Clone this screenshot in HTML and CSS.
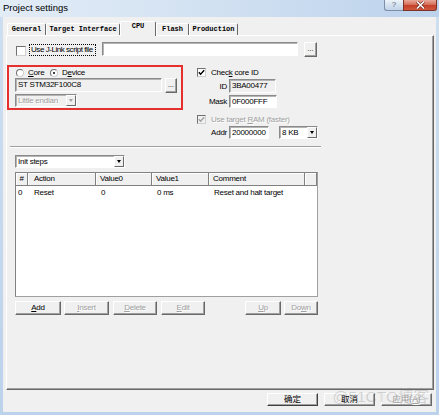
FILE: index.html
```html
<!DOCTYPE html>
<html>
<head>
<meta charset="utf-8">
<title>Project settings</title>
<link rel="stylesheet" href="styles.css">
</head>
<body>
<div class="window">
  <div class="titlebar">
    <span class="title">Project settings</span>
    <div class="caption-btns">
      <div class="cbtn help">?</div>
      <div class="cbtn close"><svg width="11" height="8" viewBox="0 0 11 8"><path d="M2 0.5 L9 7.5 M9 0.5 L2 7.5" stroke="#5a1a10" stroke-width="2.6"/><path d="M2 0.5 L9 7.5 M9 0.5 L2 7.5" stroke="#fff" stroke-width="1.6"/></svg></div>
    </div>
  </div>
  <div class="client">
    <div class="tabs">
      <div class="tab t-general">General</div>
      <div class="tab t-target">Target Interface</div>
      <div class="tab active t-cpu">CPU</div>
      <div class="tab t-flash">Flash</div>
      <div class="tab t-prod">Production</div>
    </div>
    <div class="panel">
      <div class="jlink-row">
        <span class="checkbox jl-check"></span>
        <span class="focus-label">Use J-Link script file</span>
        <span class="textbox jlink-path"></span>
        <span class="btn browse">...</span>
      </div>
      <div class="mid">
        <div class="target-box">
          <div class="radio-row">
            <span class="radio"></span><span class="rlabel core-label"><u>C</u>ore</span>
            <span class="radio checked"></span><span class="rlabel">D<u>e</u>vice</span>
          </div>
          <div class="device-row">
            <span class="textbox readonly device-name">ST STM32F100C8</span>
            <span class="btn browse device-browse">...</span>
          </div>
          <div class="combo disabled endian"><span class="combo-text">Little endian</span><span class="drop"></span></div>
        </div>
        <div class="core-box">
          <div class="check-row">
            <span class="checkbox small checked"><svg width="7" height="7" viewBox="0 0 7 7"><path d="M0.8 3.2 L2.6 5.2 L6.2 1.2" stroke="#000" stroke-width="1.4" fill="none"/></svg></span>
            <span class="clabel">Chec<u>k</u> core ID</span>
          </div>
          <div class="field">
            <span class="flabel">ID</span>
            <span class="textbox readonly id-box">3BA00477</span>
          </div>
          <div class="field">
            <span class="flabel">Mask</span>
            <span class="textbox mask-box">0F000FFF</span>
          </div>
          <div class="check-row ram-row disabled">
            <span class="checkbox small checked disabled-box"><svg width="7" height="7" viewBox="0 0 7 7"><path d="M0.8 3.2 L2.6 5.2 L6.2 1.2" stroke="#a0a0a0" stroke-width="1.4" fill="none"/></svg></span>
            <span class="clabel">Use target <u>R</u>AM (faster)</span>
          </div>
          <div class="field addr-row">
            <span class="flabel">Addr</span>
            <span class="textbox addr-box">20000000</span>
            <span class="combo size-combo"><span class="combo-text">8 KB</span><span class="drop"></span></span>
          </div>
        </div>
      </div>
      <div class="separator"></div>
      <div class="combo init-combo"><span class="combo-text">Init steps</span><span class="drop"></span></div>
      <div class="listview">
        <div class="lv-header">
          <span class="hcell c-num">#</span>
          <span class="hcell c-action">Action</span>
          <span class="hcell c-v0">Value0</span>
          <span class="hcell c-v1">Value1</span>
          <span class="hcell c-comment">Comment</span>
          <span class="hcell c-fill"></span>
        </div>
        <div class="lv-row">
          <span class="cell c-num">0</span>
          <span class="cell c-action">Reset</span>
          <span class="cell c-v0">0</span>
          <span class="cell c-v1">0 ms</span>
          <span class="cell c-comment">Reset and halt target</span>
        </div>
      </div>
      <div class="btn-row">
        <span class="btn b-add"><u>A</u>dd</span>
        <span class="btn disabled b-insert"><u>I</u>nsert</span>
        <span class="btn disabled b-delete"><u>D</u>elete</span>
        <span class="btn disabled b-edit"><u>E</u>dit</span>
        <span class="btn disabled b-up"><u>U</u>p</span>
        <span class="btn disabled b-down">Do<u>w</u>n</span>
      </div>
    </div>
    <div class="dialog-btns">
      <span class="btn dlg default">确定</span>
      <span class="btn dlg">取消</span>
      <span class="btn dlg disabled">应用(<u>A</u>)</span>
    </div>
    <div class="watermark">@51CTO博客</div>
  </div>
</div>
</body>
</html>
```

FILE: styles.css
```css
* { box-sizing: border-box; }
html, body { margin: 0; padding: 0; }
body {
  width: 439px;
  height: 415px;
  overflow: hidden;
  font-family: "Liberation Sans", Arial, sans-serif;
  font-size: 8px;
  letter-spacing: -0.25px;
  color: #000;
  background: #c2d6ed;
}
u { text-decoration: underline; text-underline-offset: 1px; }

.window {
  width: 439px;
  height: 415px;
  display: flex;
  flex-direction: column;
  background: linear-gradient(to bottom, #cfdff1, #bcd2eb);
}

/* title bar */
.titlebar {
  height: 17px;
  display: flex;
  justify-content: space-between;
  align-items: flex-start;
  padding: 0 2px 0 3px;
  background: linear-gradient(to right, #e2ecf7 0%, #d3e2f2 45%, #bcd2ec 100%);
}
.title {
  font-size: 9.5px;
  letter-spacing: 0;
  line-height: 1;
  margin-top: 3px;
}
.caption-btns { display: flex; }
.cbtn {
  height: 11px;
  display: flex;
  align-items: center;
  justify-content: center;
  border: 1px solid #7c8ea8;
  border-top: none;
}
.help {
  width: 19px;
  border-radius: 0 0 0 3px;
  border-right: none;
  background: linear-gradient(#eef3f9, #d3e0ee 55%, #c3d4e8);
  color: #5a6a80;
  font-size: 8px;
  letter-spacing: 0;
  line-height: 1;
}
.close {
  width: 34px;
  border-radius: 0 0 3px 0;
  border-color: #7b3326;
  background: linear-gradient(#e9a898, #d6705a 45%, #c5412a 55%, #d0583f);
}

/* client */
.client {
  flex: 1;
  margin: 0 3px 3px 3px;
  background: #f0f0f0;
  position: relative;
  display: flex;
  flex-direction: column;
  align-items: flex-start;
}

/* tabs */
.tabs {
  display: flex;
  align-items: flex-end;
  height: 18px;
  padding-left: 4px;
}
.tab {
  height: 12px;
  border-top: 1px solid #fff;
  border-left: 1px solid #fff;
  border-right: 1px solid #696969;
  border-radius: 2px 2px 0 0;
  font-family: "Liberation Mono", "DejaVu Sans Mono", monospace;
  font-weight: bold;
  font-size: 7px;
  letter-spacing: 0;
  line-height: 11px;
  text-align: center;
}
.t-general { width: 39px; }
.t-target { width: 74px; }
.t-cpu { width: 36px; }
.t-flash { width: 33px; }
.t-prod { width: 49px; }
.tab.active {
  height: 15px;
  margin-bottom: -1px;
  position: relative;
  z-index: 1;
  background: #f0f0f0;
  line-height: 9px;
}

/* panel */
.panel {
  margin-left: 3px;
  width: 428px;
  height: 355px;
  border-top: 1px solid #fff;
  border-left: 1px solid #fff;
  border-right: 1px solid #696969;
  border-bottom: 1px solid #696969;
  box-shadow: inset -1px -1px 0 #a0a0a0;
  display: flex;
  flex-direction: column;
  align-items: flex-start;
}

/* common controls */
.checkbox {
  display: inline-flex;
  align-items: center;
  justify-content: center;
  width: 10px;
  height: 10px;
  background: #fff;
  border: 1px solid;
  border-color: #707070 #d0d0d0 #d0d0d0 #707070;
}
.checkbox.small { width: 9px; height: 9px; }
.checkbox.disabled-box { background: #f0f0f0; }

.radio {
  display: inline-flex;
  align-items: center;
  justify-content: center;
  width: 8px;
  height: 8px;
  border-radius: 50%;
  background: #fff;
  border: 1px solid;
  border-color: #707070 #d0d0d0 #d0d0d0 #707070;
}
.radio.checked::after {
  content: "";
  width: 2px;
  height: 2px;
  background: #000;
  border-radius: 50%;
}

.textbox {
  display: block;
  background: #fff;
  border: 1px solid;
  border-color: #8a8a8a #ffffff #ffffff #8a8a8a;
  box-shadow: inset 1px 1px 0 #b4b4b4;
  padding-left: 2px;
  line-height: 11px;
  white-space: nowrap;
  overflow: hidden;
}
.textbox.readonly { background: #f0f0f0; }

.btn {
  display: flex;
  align-items: center;
  justify-content: center;
  height: 14px;
  background: #f0f0f0;
  border: 1px solid;
  border-color: #ffffff #696969 #696969 #ffffff;
  box-shadow: inset -1px -1px 0 #a0a0a0;
  line-height: 1;
  white-space: nowrap;
}
.btn.disabled {
  color: #a0a0a0;
  text-shadow: 1px 1px 0 #fff;
}

.combo {
  display: flex;
  background: #fff;
  border: 1px solid;
  border-color: #8a8a8a #ffffff #ffffff #8a8a8a;
  box-shadow: inset 1px 1px 0 #b4b4b4;
  height: 13px;
}
.combo-text {
  flex: 1;
  padding-left: 2px;
  line-height: 11px;
  white-space: nowrap;
  overflow: hidden;
}
.drop {
  width: 10px;
  height: 11px;
  background: #f0f0f0;
  border: 1px solid;
  border-color: #ffffff #696969 #696969 #ffffff;
  display: flex;
  align-items: center;
  justify-content: center;
}
.drop::after {
  content: "";
  width: 0;
  height: 0;
  border-left: 2.5px solid transparent;
  border-right: 2.5px solid transparent;
  border-top: 3px solid #000;
}
.combo.disabled { background: #f0f0f0; color: #a0a0a0; }
.combo.disabled .combo-text { text-shadow: 1px 1px 0 #fff; }
.combo.disabled .drop::after { border-top-color: #a0a0a0; }

/* J-Link row */
.jlink-row {
  display: flex;
  align-items: flex-start;
  margin: 6px 0 0 9px;
  height: 15px;
}
.jl-check { margin-top: 4px; }
.focus-label {
  margin: 2px 0 0 3px;
  height: 12px;
  width: 67px;
  border: 1px dotted #000;
  padding-left: 1px;
  line-height: 10px;
  letter-spacing: -0.45px;
  white-space: nowrap;
  overflow: hidden;
}
.jlink-path { margin-left: 6px; width: 196px; height: 14px; }
.browse { margin-left: 6px; width: 13px; height: 15px; font-size: 7px; letter-spacing: 0; padding-bottom: 2px; }

/* middle */
.mid {
  display: flex;
  align-items: flex-start;
  margin-top: 8px;
}
.target-box {
  width: 176px;
  height: 45px;
  border: 2px solid #e5302e;
  padding: 1px 0 0 6px;
  display: flex;
  flex-direction: column;
  align-items: flex-start;
}
.radio-row {
  display: flex;
  align-items: center;
  height: 9px;
  margin-left: 1px;
}
.rlabel { margin-left: 4px; line-height: 9px; }
.core-label { width: 22px; }
.device-row {
  display: flex;
  align-items: flex-start;
  margin-top: 1px;
}
.device-name { width: 147px; height: 14px; }
.device-browse { margin-left: 3px; width: 12px; }
.endian { margin-top: 1px; width: 62px; }

.core-box {
  margin-left: 14px;
  padding-top: 3px;
  display: flex;
  flex-direction: column;
  align-items: flex-start;
}
.check-row {
  display: flex;
  align-items: center;
  height: 9px;
}
.clabel { margin-left: 5px; line-height: 9px; white-space: nowrap; }
.ram-row { margin-top: 7px; }
.check-row.disabled .clabel { color: #a0a0a0; text-shadow: 1px 1px 0 #fff; }
.field {
  display: flex;
  align-items: center;
  margin-top: 2px;
}
.flabel {
  width: 30px;
  margin-right: 2px;
  text-align: right;
}
.id-box { width: 47px; height: 14px; }
.mask-box { width: 48px; height: 13px; }
.addr-box { width: 40px; height: 13px; }
.size-combo { margin-left: 10px; width: 39px; }

.separator {
  margin: 7px 0 0 3px;
  width: 311px;
  height: 2px;
  border-top: 1px solid #a0a0a0;
  border-bottom: 1px solid #ffffff;
}
.init-combo { margin: 7px 0 0 8px; width: 110px; }

/* list view */
.listview {
  margin: 4px 0 0 8px;
  width: 303px;
  height: 125px;
  background: #fff;
  border: 1px solid;
  border-color: #828282 #a0a0a0 #a0a0a0 #828282;
}
.lv-header, .lv-row { display: flex; }
.lv-header { height: 13px; }
.hcell {
  height: 13px;
  background: #f0f0f0;
  border-right: 1px solid #808080;
  border-bottom: 1px solid #808080;
  box-shadow: inset 1px 1px 0 #fff;
  padding-left: 4px;
  line-height: 12px;
  white-space: nowrap;
}
.lv-row { height: 12px; margin-top: 1px; }
.cell { padding-left: 5px; line-height: 12px; white-space: nowrap; }
.c-num { width: 12px; }
.hcell.c-num { padding-left: 0; text-align: center; }
.cell.c-num { padding-left: 2px; }
.c-action { width: 68px; }
.hcell.c-action, .cell.c-action { padding-left: 6px; }
.c-v0 { width: 56px; }
.c-v1 { width: 57px; }
.c-comment { width: 96px; }
.c-fill { flex: 1; }

/* list buttons */
.btn-row {
  display: flex;
  margin: 4px 0 0 8px;
}
.b-add { width: 46px; }
.b-insert { width: 45px; margin-left: 3px; }
.b-delete { width: 44px; margin-left: 4px; }
.b-edit { width: 44px; margin-left: 4px; }
.b-up { width: 36px; margin-left: 40px; }
.b-down { width: 34px; margin-left: 3px; }

/* dialog buttons */
.dialog-btns {
  display: flex;
  align-self: stretch;
  justify-content: flex-end;
  gap: 6px;
  padding-right: 4px;
  margin-top: 3px;
}
.dlg {
  width: 51px;
  height: 13px;
  font-family: "Liberation Sans", "Noto Sans CJK SC", sans-serif;
  font-size: 8.5px;
  letter-spacing: 0;
}
.dlg.default { border-color: #ffffff #404040 #404040 #ffffff; }

.watermark {
  position: absolute;
  right: 7px;
  bottom: 8px;
  font-family: "Liberation Sans", "Noto Sans CJK SC", sans-serif;
  font-size: 15.5px;
  letter-spacing: 0;
  line-height: 1;
  color: rgba(110, 110, 110, 0.25);
  white-space: nowrap;
  pointer-events: none;
}
```
